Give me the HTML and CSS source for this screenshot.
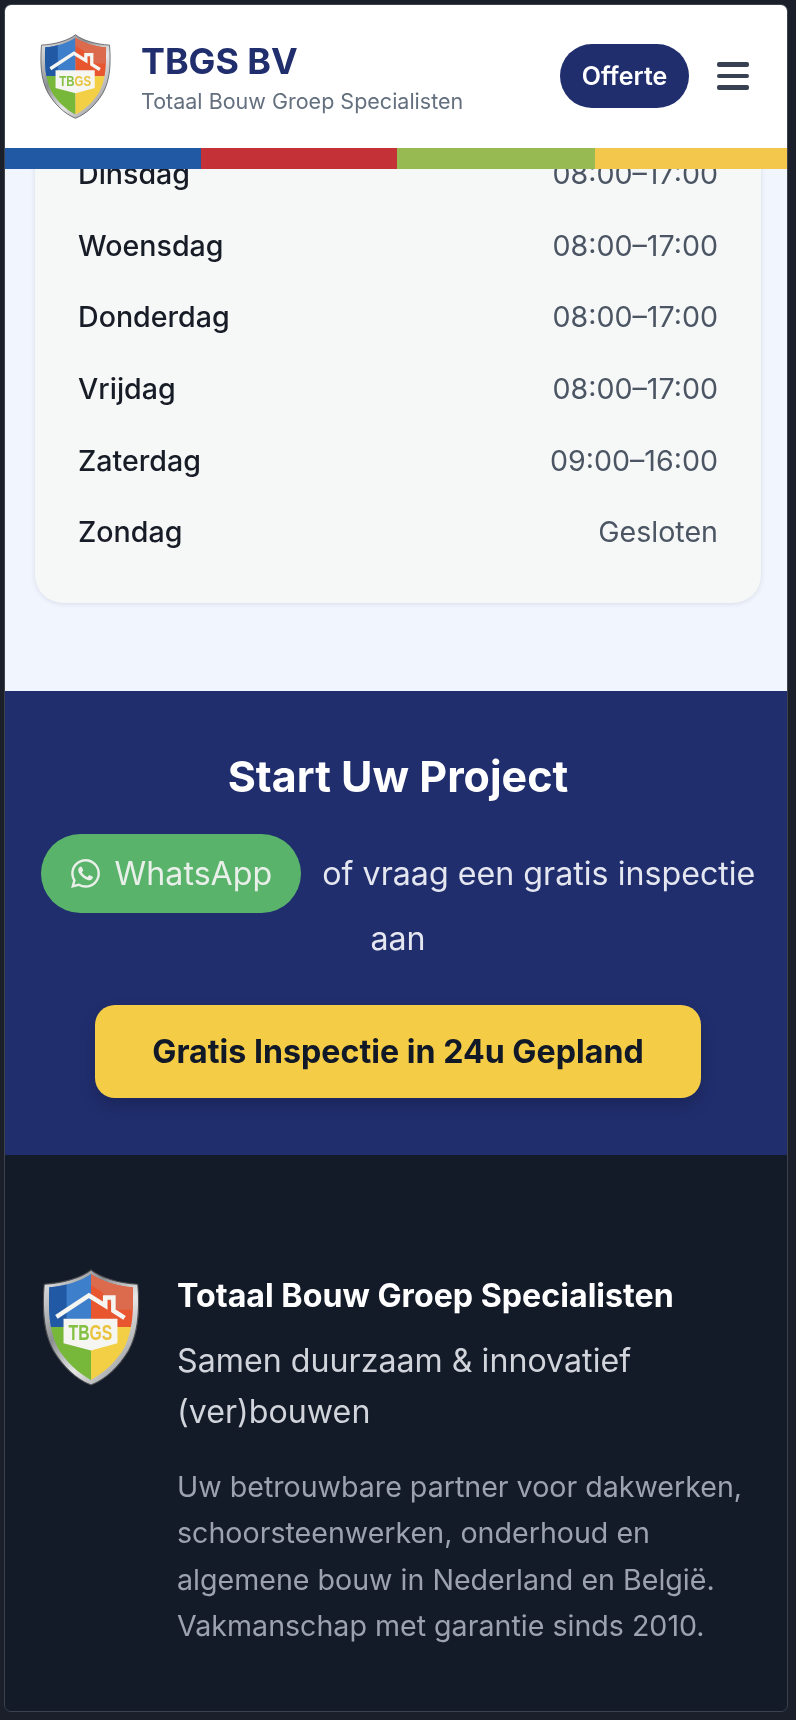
FILE: index.html
```html
<!DOCTYPE html>
<html lang="nl">
<head>
  <meta charset="UTF-8">
  <title>TBGS BV</title>
  <link rel="stylesheet" href="styles.css">
</head>
<body>
  <svg class="defs" width="0" height="0">
    <defs>
      <linearGradient id="metal" x1="0" y1="0" x2="1" y2="1">
        <stop offset="0" stop-color="#f0f0f0"/>
        <stop offset=".35" stop-color="#8c8f92"/>
        <stop offset=".6" stop-color="#e6e6e6"/>
        <stop offset="1" stop-color="#77797c"/>
      </linearGradient>
      <clipPath id="shield-clip">
        <path d="M48 5C38 12 22 17 7 18C6 42 7 60 15 77C23 91 35 102 48 109C61 102 73 91 81 77C89 60 90 42 89 18C74 17 58 12 48 5Z"/>
      </clipPath>
      <symbol id="logo" viewBox="0 0 96 115">
        <path d="M48 1C38 9 20 14 2 15C0 40 1 62 11 80C20 95 33 108 48 114C63 108 76 95 85 80C95 62 96 40 94 15C76 14 58 9 48 1Z" fill="url(#metal)" stroke="#4a4c50" stroke-width="1"/>
        <g clip-path="url(#shield-clip)">
          <rect x="0" y="0" width="48" height="57" fill="#3d7fcb"/>
          <rect x="0" y="0" width="24" height="57" fill="#2259a5"/>
          <rect x="48" y="0" width="48" height="57" fill="#e8562f"/>
          <path d="M48 0H96V40L74 40L58 22L48 16Z" fill="#dc6a4d"/>
          <rect x="0" y="57" width="48" height="58" fill="#77b83a"/>
          <rect x="48" y="57" width="48" height="58" fill="#f3cf45"/>
        </g>
        <path d="M14 47L46 26L62 36V28H70V41L81 48" fill="none" stroke="#f5f5f1" stroke-width="4.5"/>
        <path d="M21 49H74V73L48 80L21 73Z" fill="#f5f5f1"/>
        <text class="logo-text" x="47.5" y="70" text-anchor="middle" textLength="43" lengthAdjust="spacingAndGlyphs"><tspan fill="#84c044">TB</tspan><tspan fill="#e9c33c">GS</tspan></text>
      </symbol>
    </defs>
  </svg>

  <div class="frame">
    <header class="site-header">
      <div class="brand">
        <svg class="brand-logo"><use href="#logo"/></svg>
        <div class="brand-text">
          <div class="brand-name">TBGS BV</div>
          <div class="brand-sub">Totaal Bouw Groep Specialisten</div>
        </div>
      </div>
      <div class="header-actions">
        <a class="offerte" href="#">Offerte</a>
        <div class="burger"><span></span><span></span><span></span></div>
      </div>
    </header>
    <div class="stripe">
      <span class="s-blue"></span><span class="s-red"></span><span class="s-green"></span><span class="s-yellow"></span>
    </div>

    <main class="hours-section">
      <div class="hours-card">
        <div class="hours-row"><span class="day">Dinsdag</span><span class="time">08:00–17:00</span></div>
        <div class="hours-row"><span class="day">Woensdag</span><span class="time">08:00–17:00</span></div>
        <div class="hours-row"><span class="day">Donderdag</span><span class="time">08:00–17:00</span></div>
        <div class="hours-row"><span class="day">Vrijdag</span><span class="time">08:00–17:00</span></div>
        <div class="hours-row"><span class="day">Zaterdag</span><span class="time">09:00–16:00</span></div>
        <div class="hours-row"><span class="day">Zondag</span><span class="time">Gesloten</span></div>
      </div>
    </main>

    <section class="cta">
      <h2>Start Uw Project</h2>
      <p class="cta-line">
        <a class="whatsapp" href="#">
          <svg class="wa-icon" viewBox="0 0 24 24"><path fill="currentColor" d="M17.47 14.38c-.3-.15-1.76-.87-2.03-.97-.27-.1-.47-.15-.67.15-.2.3-.77.97-.94 1.16-.17.2-.35.22-.65.08-.3-.15-1.26-.46-2.39-1.48-.88-.79-1.48-1.76-1.65-2.06-.17-.3-.02-.46.13-.61.13-.13.3-.35.45-.52.15-.17.2-.3.3-.5.1-.2.05-.37-.03-.52-.07-.15-.67-1.61-.92-2.21-.24-.58-.49-.5-.67-.51h-.57c-.2 0-.52.07-.79.37-.27.3-1.04 1.02-1.04 2.48s1.07 2.88 1.21 3.07c.15.2 2.1 3.2 5.08 4.49.71.3 1.26.49 1.69.62.71.23 1.36.2 1.87.12.57-.09 1.76-.72 2.01-1.41.25-.7.25-1.29.17-1.41-.07-.13-.27-.2-.57-.35zM12.05 21.79h-.01a9.87 9.87 0 0 1-5.03-1.38l-.36-.21-3.74.98 1-3.65-.24-.37A9.86 9.86 0 0 1 2.17 11.9C2.17 6.45 6.61 2.01 12.06 2.01c2.64 0 5.12 1.03 6.98 2.9a9.83 9.83 0 0 1 2.89 6.99c0 5.45-4.44 9.89-9.88 9.89zM20.46 3.49A11.82 11.82 0 0 0 12.05 0C5.5 0 .16 5.34.16 11.89c0 2.1.55 4.14 1.59 5.95L.06 24l6.3-1.65a11.88 11.88 0 0 0 5.68 1.45h.01c6.55 0 11.89-5.34 11.89-11.89 0-3.18-1.24-6.16-3.48-8.41z"/></svg>
          <span>WhatsApp</span>
        </a>
        <span class="cta-text">of vraag een gratis inspectie aan</span>
      </p>
      <a class="inspect-btn" href="#">Gratis Inspectie in 24u Gepland</a>
    </section>

    <footer class="site-footer">
      <svg class="footer-logo"><use href="#logo"/></svg>
      <div class="footer-text">
        <h3>Totaal Bouw Groep Specialisten</h3>
        <p class="tagline">Samen duurzaam &amp; innovatief (ver)bouwen</p>
        <p class="about">Uw betrouwbare partner voor dakwerken, schoorsteenwerken, onderhoud en algemene bouw in Nederland en België. Vakmanschap met garantie sinds 2010.</p>
      </div>
    </footer>
  </div>
</body>
</html>
```

FILE: styles.css
```css
* {
  box-sizing: border-box;
}
html, body {
  margin: 0;
  padding: 0;
  background: #1b1f2a;
}
body {
  font-family: Inter, "Liberation Sans", sans-serif;
  padding: 4px 8px 8px 4px;
}
a {
  text-decoration: none;
}
.defs {
  position: absolute;
}
.logo-text {
  font-family: "Liberation Sans", sans-serif;
  font-size: 21px;
  font-weight: bold;
}

.frame {
  width: 784px;
  height: 1708px;
  border: 1px solid #3d424d;
  border-radius: 7px;
  overflow: hidden;
  background: #131a28;
  filter: blur(.35px);
}

/* header */
.site-header {
  height: 143px;
  background: #fff;
  display: flex;
  align-items: center;
  justify-content: space-between;
  padding: 0 38px 0 35px;
}
.brand {
  display: flex;
  align-items: center;
  gap: 30px;
}
.brand-logo {
  width: 71px;
  height: 85px;
}
.brand-text {
  padding-top: 2px;
}
.brand-name {
  font-size: 35.8px;
  font-weight: 700;
  color: #202e6e;
  line-height: 42px;
}
.brand-sub {
  font-size: 21.5px;
  color: #64707f;
  line-height: 28px;
  margin-top: 5px;
}
.header-actions {
  display: flex;
  align-items: center;
  gap: 28px;
  padding-bottom: 1px;
}
.offerte {
  display: block;
  width: 129px;
  height: 64px;
  line-height: 64px;
  text-align: center;
  border-radius: 32px;
  background: #202e6e;
  color: #fff;
  font-size: 25px;
  font-weight: 600;
}
.burger {
  width: 32px;
  display: flex;
  flex-direction: column;
  gap: 7px;
}
.burger span {
  display: block;
  height: 4.5px;
  border-radius: 2px;
  background: #374151;
}
.stripe {
  display: grid;
  grid-template-columns: 196px 196px 198px 1fr;
  height: 21px;
  position: relative;
  z-index: 2;
}
.s-blue { background: #2259a5; }
.s-red { background: #c43237; }
.s-green { background: #97ba52; }
.s-yellow { background: #f2c74c; }

/* opening hours */
.hours-section {
  background: #f1f5fd;
  padding: 0 26px 88px 30px;
  overflow: hidden;
}
.hours-card {
  margin-top: -66px;
  padding: 35px 43px 35px 43px;
  background: #f6f8f8;
  border-radius: 28px;
  box-shadow: 0 1px 5px rgba(30, 50, 90, .12);
}
.hours-row {
  height: 71.6px;
  display: flex;
  align-items: center;
  justify-content: space-between;
  font-size: 28.6px;
}
.day {
  font-weight: 500;
  color: #171c26;
}
.time {
  color: #4b5563;
}

/* call to action */
.cta {
  height: 464px;
  background: #202e6e;
  padding: 60px 28px 0 32px;
  text-align: center;
  color: #fff;
}
.cta h2 {
  margin: 0;
  font-size: 43px;
  line-height: 50px;
  font-weight: 700;
}
.cta-line {
  margin: 33px 0 0;
  font-size: 32.2px;
  line-height: 51px;
  color: #e5e7f0;
}
.whatsapp {
  display: inline-flex;
  align-items: center;
  gap: 15px;
  height: 79px;
  padding: 0 29px 0 30px;
  border-radius: 40px;
  background: #5ab36b;
  color: #e9efe9;
  margin-right: 12px;
  vertical-align: -3px;
}
.wa-icon {
  width: 29px;
  height: 29px;
}
.inspect-btn {
  display: block;
  width: 606px;
  height: 93px;
  line-height: 93px;
  margin: 41px auto 0;
  border-radius: 20px;
  background: #f4cc45;
  color: #111827;
  font-size: 32.2px;
  font-weight: 700;
  box-shadow: 0 8px 16px rgba(0, 0, 0, .18);
}

/* footer */
.site-footer {
  display: flex;
  gap: 37px;
  padding: 114px 30px 0 37px;
  color: #fff;
}
.footer-logo {
  flex: none;
  width: 98px;
  height: 117px;
}
.site-footer h3 {
  margin: 0;
  font-size: 32.2px;
  line-height: 54px;
  font-weight: 700;
}
.tagline {
  margin: 12px 0 0;
  font-size: 32.2px;
  line-height: 51px;
  color: #d1d5db;
}
.about {
  margin: 27px 0 0;
  font-size: 28.6px;
  line-height: 46.5px;
  color: #9ca3af;
}
```
